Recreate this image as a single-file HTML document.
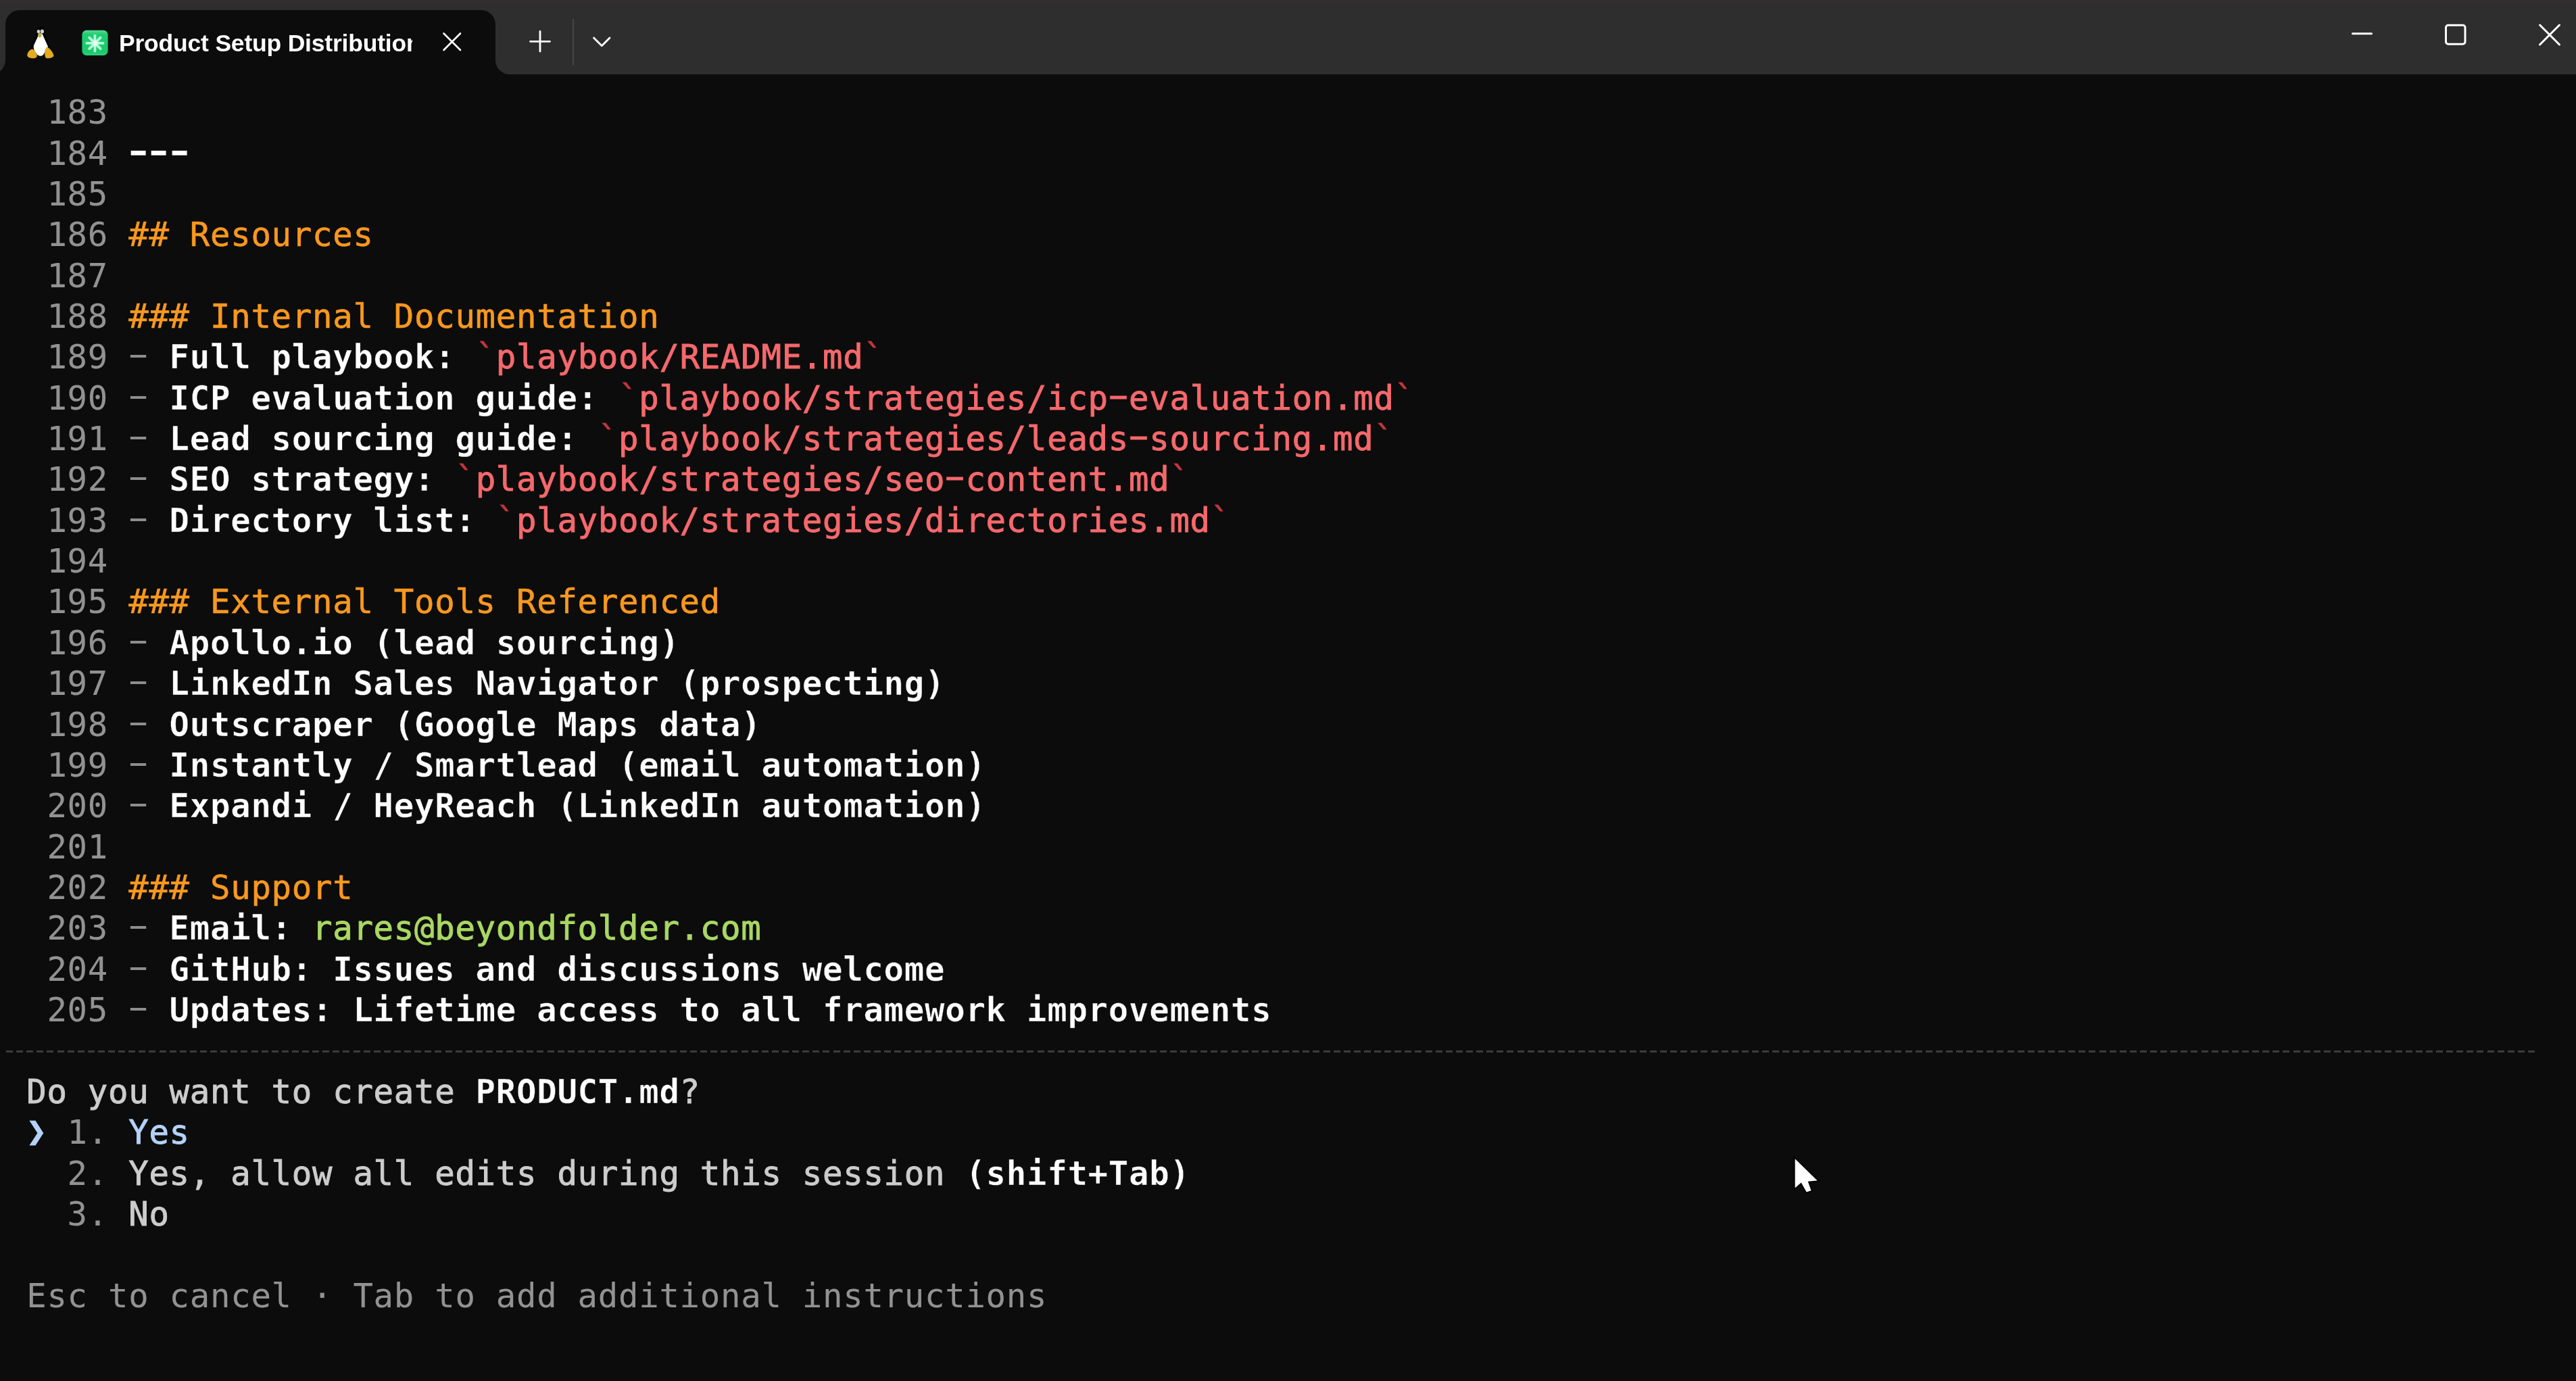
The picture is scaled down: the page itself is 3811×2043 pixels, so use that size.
<!DOCTYPE html>
<html lang="en">
<head>
<meta charset="utf-8">
<title>Product Setup Distribution</title>
<style>
*{box-sizing:border-box;margin:0;padding:0}
html,body{width:3811px;height:2043px;overflow:hidden;background:#0c0c0c}
body{position:relative;font-family:"DejaVu Sans Mono","Liberation Mono",monospace;color:#cccccc}
#titlebar{position:absolute;left:0;top:0;width:3811px;height:110px;background:#2e2e2e}
#topstrip{position:absolute;left:0;top:0;width:3811px;height:8px;background:#302e2f}
#tab{position:absolute;left:8px;top:14.5px;width:725px;height:95.5px;background:#0c0c0c;border-radius:21px 21px 0 0}
#tab:before,#tab:after{content:"";position:absolute;bottom:0;width:21px;height:21px;background:transparent}
#tab:before{left:-21px;border-bottom-right-radius:21px;box-shadow:8px 8px 0 8px #0c0c0c}
#tab:after{right:-21px;border-bottom-left-radius:21px;box-shadow:-8px 8px 0 8px #0c0c0c}
#title{position:absolute;left:175.5px;top:36px;width:433.5px;height:56px;overflow:hidden;white-space:nowrap;
 font-family:"Liberation Sans","DejaVu Sans",sans-serif;font-weight:bold;font-size:35.5px;line-height:56px;color:#ffffff;letter-spacing:-0.2px;will-change:transform}
.ico{position:absolute}
#term{position:absolute;left:0;top:110px;width:3811px;height:1933px;background:#0c0c0c}
.r{position:absolute;left:8.50px;height:60.36px;line-height:60.36px;font-size:49.00px;letter-spacing:0.6996px;white-space:pre;-webkit-text-stroke:0.9px;will-change:transform}
.hy{display:inline-block;transform:translateY(-4px) scaleX(1.85)}
.n{color:#929292;-webkit-text-stroke:0.1px}
.d{color:#8e8e8e;-webkit-text-stroke:0.1px}
.wb{color:#ffffff;font-weight:bold;-webkit-text-stroke:0.4px #0c0c0c}
.wb .hy{transform:translateY(-3px) scaleX(1.5)}
.o{color:#f8981f;-webkit-text-stroke:0.6px}
.rd{color:#f5686c}
.bt{color:#c2363f}
.g{color:#a9d763}
.t{color:#cccccc}
.sel{color:#b4d2f8}
.arrow{color:#b4d2f8;position:relative;top:-2.5px}
#dash{position:absolute;left:8.7px;top:1554.38px;width:3742px;height:3px;
 background:repeating-linear-gradient(90deg,#3c3c3c 0,#3c3c3c 10px,transparent 10px,transparent 15.105px)}
</style>
</head>
<body>
<div id="titlebar">
 <div id="topstrip"></div>
 <div id="tab"></div>
 <!-- penguin -->
 <svg class="ico" style="left:36px;top:36px" width="48" height="54" viewBox="36 36 48 54">
  <path d="M59.8 39.8 C55 39.8 53.8 44 54.3 49 C52 56 43.5 68 44.5 81 L75 81 C76 68 68 57 66 50 C66.5 44 65 39.8 59.8 39.8 Z" fill="#040404"/>
  <path d="M58.6 48.5 L50 67 C49 71 50.5 75 53 78 C55 81.5 57.5 82.8 60 82.8 C63 82.8 65.5 80 66.5 76 C68.5 73.5 70.8 71.5 70.8 68.5 L62.5 50 Z" fill="#fffffb"/>
  <ellipse cx="57" cy="46.6" rx="2.3" ry="2.7" fill="#d4d4d4"/>
  <ellipse cx="62.4" cy="46.4" rx="2.6" ry="2.9" fill="#d4d4d4"/>
  <path d="M56 50 Q59 48 62 50 Q61.5 55 58.8 56 Q56.6 55 56 50 Z" fill="#bdb14a"/>
  <path d="M40.3 82 C40 78 43.5 74 47.3 72.5 C50 72.8 52.8 77 54.6 81 C55.4 84 53.5 86 50 86.2 C46 86.4 40.6 85.5 40.3 82 Z" fill="#e2ab20"/>
  <path d="M66.3 79.5 C66 75 67.3 71 69.8 69.8 C72.8 70.5 78.8 77.5 79.5 82 C79.5 85.2 73 86.5 69.5 86.2 C66.8 85.8 66.4 82.5 66.3 79.5 Z" fill="#e2ab20"/>
 </svg>
 <!-- green asterisk emoji -->
 <svg class="ico" style="left:120px;top:43px" width="42" height="42" viewBox="120 43 42 42">
  <defs><linearGradient id="gg" x1="0" y1="0" x2="0" y2="1"><stop offset="0" stop-color="#58dc9a"/><stop offset="0.16" stop-color="#22cc72"/><stop offset="0.85" stop-color="#1cc86c"/><stop offset="1" stop-color="#2fcf7f"/></linearGradient></defs>
  <rect x="121.4" y="44.8" width="38.2" height="37.2" rx="6.5" fill="url(#gg)"/>
  <g stroke="#b4ffd8" stroke-width="3.8" stroke-linecap="round">
   <line x1="140.4" y1="52.6" x2="140.4" y2="75.4"/>
   <line x1="128.4" y1="63.9" x2="152.4" y2="63.9"/>
   <line x1="132.2" y1="55.7" x2="148.6" y2="72.1"/>
   <line x1="148.6" y1="55.7" x2="132.2" y2="72.1"/>
  </g>
  <circle cx="140.4" cy="63.9" r="3.6" fill="#eafff4"/>
 </svg>
 <div id="title">Product Setup Distribution</div>
 <!-- tab close -->
 <svg class="ico" style="left:654px;top:47px" width="30" height="30" viewBox="0 0 30 30">
  <path d="M2.5 2.5 L27 27 M27 2.5 L2.5 27" stroke="#fff" stroke-width="2.6" stroke-linecap="round" fill="none"/>
 </svg>
 <!-- plus -->
 <svg class="ico" style="left:782px;top:44px" width="34" height="34" viewBox="0 0 34 34">
  <path d="M17 2.5 V32 M2.5 17.3 H31.5" stroke="#fff" stroke-width="2.8" stroke-linecap="round" fill="none"/>
 </svg>
 <div class="ico" style="left:847px;top:28px;width:2px;height:69px;background:#454545"></div>
 <!-- chevron -->
 <svg class="ico" style="left:874px;top:50px" width="32" height="24" viewBox="0 0 32 24">
  <path d="M4.5 6 L16.3 17.8 L28 6" stroke="#fff" stroke-width="2.8" stroke-linecap="round" stroke-linejoin="round" fill="none"/>
 </svg>
 <!-- window controls -->
 <svg class="ico" style="left:3470px;top:30px" width="330" height="44" viewBox="0 0 330 44">
  <g stroke="#fff" stroke-width="3" stroke-linecap="round" fill="none">
   <path d="M10.5 19.7 H38.5"/>
   <rect x="148.5" y="7.2" width="28.5" height="28" rx="3.5"/>
   <path d="M287.5 7 L316.5 36 M316.5 7 L287.5 36"/>
  </g>
 </svg>
</div>
<div id="term"></div>
<div class="r" style="top:137.14px"><span class="n">  183 </span></div>
<div class="r" style="top:197.50px"><span class="n">  184 </span><span class="wb"><span class="hy">-</span><span class="hy">-</span><span class="hy">-</span></span></div>
<div class="r" style="top:257.86px"><span class="n">  185 </span></div>
<div class="r" style="top:318.22px"><span class="n">  186 </span><span class="o">## Resources</span></div>
<div class="r" style="top:378.58px"><span class="n">  187 </span></div>
<div class="r" style="top:438.94px"><span class="n">  188 </span><span class="o">### Internal Documentation</span></div>
<div class="r" style="top:499.30px"><span class="n">  189 </span><span class="d"><span class="hy">-</span> </span><span class="wb">Full playbook: </span><span class="bt">`</span><span class="rd">playbook/README.md</span><span class="bt">`</span></div>
<div class="r" style="top:559.66px"><span class="n">  190 </span><span class="d"><span class="hy">-</span> </span><span class="wb">ICP evaluation guide: </span><span class="bt">`</span><span class="rd">playbook/strategies/icp<span class="hy">-</span>evaluation.md</span><span class="bt">`</span></div>
<div class="r" style="top:620.02px"><span class="n">  191 </span><span class="d"><span class="hy">-</span> </span><span class="wb">Lead sourcing guide: </span><span class="bt">`</span><span class="rd">playbook/strategies/leads<span class="hy">-</span>sourcing.md</span><span class="bt">`</span></div>
<div class="r" style="top:680.38px"><span class="n">  192 </span><span class="d"><span class="hy">-</span> </span><span class="wb">SEO strategy: </span><span class="bt">`</span><span class="rd">playbook/strategies/seo<span class="hy">-</span>content.md</span><span class="bt">`</span></div>
<div class="r" style="top:740.74px"><span class="n">  193 </span><span class="d"><span class="hy">-</span> </span><span class="wb">Directory list: </span><span class="bt">`</span><span class="rd">playbook/strategies/directories.md</span><span class="bt">`</span></div>
<div class="r" style="top:801.10px"><span class="n">  194 </span></div>
<div class="r" style="top:861.46px"><span class="n">  195 </span><span class="o">### External Tools Referenced</span></div>
<div class="r" style="top:921.82px"><span class="n">  196 </span><span class="d"><span class="hy">-</span> </span><span class="wb">Apollo.io (lead sourcing)</span></div>
<div class="r" style="top:982.18px"><span class="n">  197 </span><span class="d"><span class="hy">-</span> </span><span class="wb">LinkedIn Sales Navigator (prospecting)</span></div>
<div class="r" style="top:1042.54px"><span class="n">  198 </span><span class="d"><span class="hy">-</span> </span><span class="wb">Outscraper (Google Maps data)</span></div>
<div class="r" style="top:1102.90px"><span class="n">  199 </span><span class="d"><span class="hy">-</span> </span><span class="wb">Instantly / Smartlead (email automation)</span></div>
<div class="r" style="top:1163.26px"><span class="n">  200 </span><span class="d"><span class="hy">-</span> </span><span class="wb">Expandi / HeyReach (LinkedIn automation)</span></div>
<div class="r" style="top:1223.62px"><span class="n">  201 </span></div>
<div class="r" style="top:1283.98px"><span class="n">  202 </span><span class="o">### Support</span></div>
<div class="r" style="top:1344.34px"><span class="n">  203 </span><span class="d"><span class="hy">-</span> </span><span class="wb">Email: </span><span class="g">rares@beyondfolder.com</span></div>
<div class="r" style="top:1404.70px"><span class="n">  204 </span><span class="d"><span class="hy">-</span> </span><span class="wb">GitHub: Issues and discussions welcome</span></div>
<div class="r" style="top:1465.06px"><span class="n">  205 </span><span class="d"><span class="hy">-</span> </span><span class="wb">Updates: Lifetime access to all framework improvements</span></div>
<div class="r" style="top:1585.78px"><span class="t"> Do you want to create </span><span class="wb">PRODUCT.md</span><span class="t">?</span></div>
<div class="r" style="top:1646.14px"><span class="sel"> </span><span class="arrow">❯</span><span class="n"> 1. </span><span class="sel">Yes</span></div>
<div class="r" style="top:1706.50px"><span class="n">   2. </span><span class="t">Yes, allow all edits during this session </span><span class="wb">(shift+Tab)</span></div>
<div class="r" style="top:1766.86px"><span class="n">   3. </span><span class="t">No</span></div>
<div class="r" style="top:1887.58px"><span class="n"> Esc to cancel · Tab to add additional instructions</span></div>
<div id="dash"></div>
<!-- mouse cursor -->
<svg class="ico" style="left:2650px;top:1708px" width="46" height="62" viewBox="0 0 46 62">
 <path d="M5.6 6.3 L5.6 49.4 L14.7 41.5 L22.6 55.4 L29.5 53.3 L24.7 39.8 L38.6 38.5 Z" fill="#fff" stroke="#000" stroke-width="4" stroke-linejoin="miter" paint-order="stroke"/>
</svg>
</body>
</html>
